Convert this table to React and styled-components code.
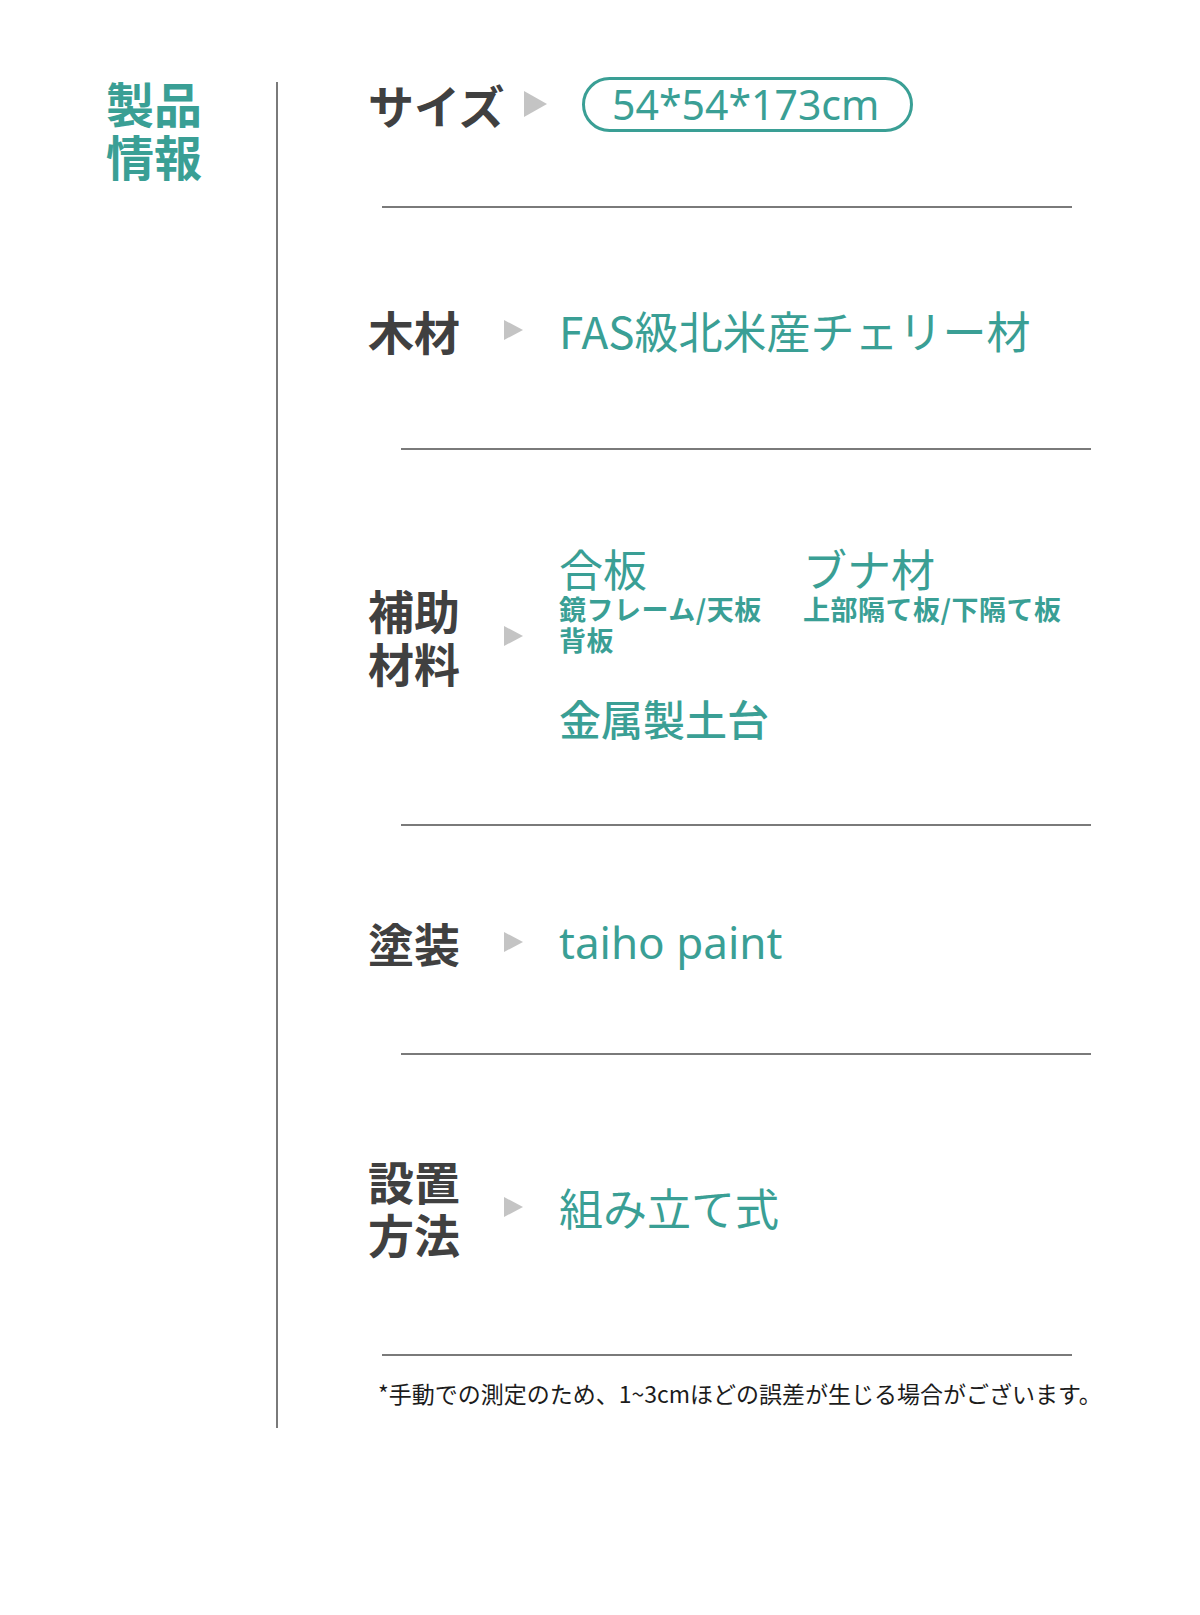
import styled, { createGlobalStyle } from "styled-components";

const Global = createGlobalStyle`
  body {
    margin: 0;
    background: #fff;
    font-family: "Noto Sans CJK JP", "Noto Sans", sans-serif;
  }
`;

const TEAL = "#3a9f95";
const INK = "#404040";

const Page = styled.div`
  width: 1200px;
  height: 1615px;
  display: flex;
  align-items: flex-start;
  padding-top: 74px;
  box-sizing: border-box;
`;

const Side = styled.div`
  width: 274px;
  flex-shrink: 0;
  padding-left: 106px;
  box-sizing: border-box;
`;

const Heading = styled.h1`
  margin: 0;
  padding-top: 2px;
  font-size: 48px;
  line-height: 53px;
  font-weight: 700;
  color: ${TEAL};
  white-space: nowrap;
`;

const Rule = styled.div`
  width: 2px;
  height: 1346px;
  flex-shrink: 0;
  margin-left: 2px;
  margin-top: 8px;
  background: #7a7a7a;
`;

const Main = styled.main`
  flex: 1;
  padding-left: 90px;
`;

const Section = styled.section`
  display: flex;
  align-items: center;
  height: ${(p) => p.$h}px;
  margin-top: ${(p) => p.$top}px;
`;

const Label = styled.div`
  width: ${(p) => p.$w}px;
  flex-shrink: 0;
  font-size: 46px;
  line-height: 53px;
  font-weight: 700;
  color: ${INK};
  white-space: nowrap;
`;

const Arrow = styled.span`
  width: 0;
  height: 0;
  flex-shrink: 0;
  border-style: solid;
  border-color: transparent transparent transparent #c4c4c4;
  border-width: ${(p) => p.$h / 2}px 0 ${(p) => p.$h / 2}px ${(p) => p.$w}px;
  margin-right: ${(p) => p.$gap}px;
`;

const Value = styled.div`
  font-family: ${(p) => (p.$latin ? '"Noto Sans", sans-serif' : "inherit")};
  font-size: 44px;
  line-height: 50px;
  font-weight: 400;
  color: ${TEAL};
  white-space: nowrap;
`;

const Pill = styled.div`
  width: 331px;
  height: 55px;
  box-sizing: border-box;
  border: 3px solid ${TEAL};
  border-radius: 28px;
  padding-left: 27px;
  display: flex;
  align-items: center;
  font-family: "Noto Sans", sans-serif;
  font-size: 41px;
  color: ${TEAL};
`;

const Divider = styled.hr`
  border: 0;
  height: 2px;
  background: #7a7a7a;
  margin: ${(p) => p.$top}px 0 0 ${(p) => p.$left}px;
  width: 690px;
`;

const Materials = styled.div`
  margin-top: 14px;
  color: ${TEAL};
`;

const MaterialGrid = styled.div`
  display: grid;
  grid-template-columns: 244px auto;
`;

const MatTitle = styled.div`
  font-size: 44px;
  line-height: 50px;
  white-space: nowrap;
`;

const MatSub = styled.div`
  font-size: 27px;
  line-height: 31px;
  font-weight: 700;
  letter-spacing: 0.5px;
  white-space: nowrap;
`;

const MatMetal = styled.div`
  margin-top: 38px;
  font-size: 42px;
  line-height: 50px;
  font-weight: 500;
`;

const Note = styled.p`
  margin: 21px 0 0 10px;
  font-size: 23px;
  line-height: 32px;
  color: #1c1c1c;
  white-space: nowrap;
`;

export default function App() {
  return (
    <>
      <Global />
      <Page>
        <Side>
          <Heading>
            製品
            <br />
            情報
          </Heading>
        </Side>
        <Rule />
        <Main>
          <Section $h={60} $top={0}>
            <Label $w={156}>サイズ</Label>
            <Arrow $w={23} $h={27} $gap={35} />
            <Pill>54*54*173cm</Pill>
          </Section>
          <Divider $top={72} $left={14} />

          <Section $h={60} $top={92}>
            <Label $w={136}>木材</Label>
            <Arrow $w={19} $h={21} $gap={36} />
            <Value>FAS級北米産チェリー材</Value>
          </Section>
          <Divider $top={88} $left={33} />

          <Section $h={200} $top={86}>
            <Label $w={136}>
              補助
              <br />
              材料
            </Label>
            <Arrow $w={19} $h={21} $gap={36} />
            <Materials>
              <MaterialGrid>
                <div>
                  <MatTitle>合板</MatTitle>
                  <MatSub>鏡フレーム/天板</MatSub>
                  <MatSub>背板</MatSub>
                </div>
                <div>
                  <MatTitle>ブナ材</MatTitle>
                  <MatSub>上部隔て板/下隔て板</MatSub>
                </div>
              </MaterialGrid>
              <MatMetal>金属製土台</MatMetal>
            </Materials>
          </Section>
          <Divider $top={88} $left={33} />

          <Section $h={60} $top={86}>
            <Label $w={136}>塗装</Label>
            <Arrow $w={19} $h={21} $gap={36} />
            <Value $latin>taiho paint</Value>
          </Section>
          <Divider $top={81} $left={33} />

          <Section $h={110} $top={97}>
            <Label $w={136}>
              設置
              <br />
              方法
            </Label>
            <Arrow $w={19} $h={21} $gap={36} />
            <Value>組み立て式</Value>
          </Section>
          <Divider $top={92} $left={14} />

          <Note>*手動での測定のため、1~3cmほどの誤差が生じる場合がございます。</Note>
        </Main>
      </Page>
    </>
  );
}
